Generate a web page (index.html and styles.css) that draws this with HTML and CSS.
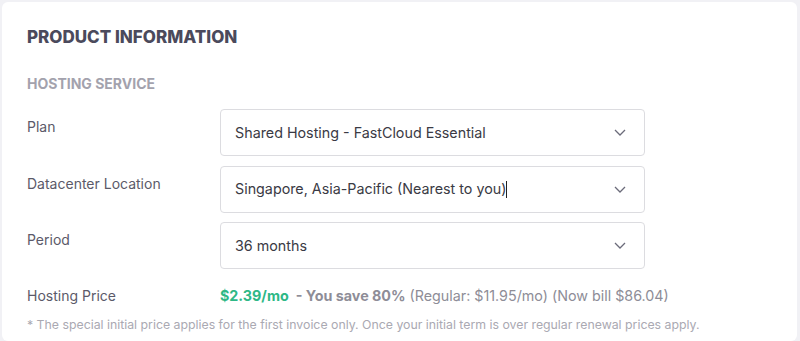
FILE: index.html
```html
<!DOCTYPE html>
<html>
<head>
<meta charset="utf-8">
<link rel="stylesheet" href="styles.css">
</head>
<body>
<div class="card">
  <h1 class="title">PRODUCT INFORMATION</h1>
  <h2 class="subtitle">HOSTING SERVICE</h2>
  <div class="form">
    <div class="row">
      <div class="label">Plan</div>
      <div class="select"><span>Shared Hosting - FastCloud Essential</span><svg class="chev" width="12" height="7" viewBox="0 0 12 7"><path d="M1 1l5 5 5-5" fill="none" stroke="#6b6b7a" stroke-width="1.3"/></svg></div>
    </div>
    <div class="row">
      <div class="label">Datacenter Location</div>
      <div class="select"><span>Singapore, Asia-Pacific (Nearest to you)<span class="caret"></span></span><svg class="chev" width="12" height="7" viewBox="0 0 12 7"><path d="M1 1l5 5 5-5" fill="none" stroke="#6b6b7a" stroke-width="1.3"/></svg></div>
    </div>
    <div class="row">
      <div class="label">Period</div>
      <div class="select"><span>36 months</span><svg class="chev" width="12" height="7" viewBox="0 0 12 7"><path d="M1 1l5 5 5-5" fill="none" stroke="#6b6b7a" stroke-width="1.3"/></svg></div>
    </div>
    <div class="row price-row">
      <div class="label">Hosting Price</div>
      <div class="price"><span class="green">$2.39/mo</span> <span class="save">- You save 80%</span> (Regular: $11.95/mo) (Now bill $86.04)</div>
    </div>
  </div>
  <p class="note">* The special initial price applies for the first invoice only. Once your initial term is over regular renewal prices apply.</p>
</div>
</body>
</html>
```
FILE: styles.css
```css
html, body { margin: 0; padding: 0; }
body {
  background: #f1f1f5;
  font-family: Inter, "Noto Sans", sans-serif;
  width: 800px;
  height: 341px;
  overflow: hidden;
}
.card {
  background: #fff;
  margin: 2px 3px 0 2px;
  border-radius: 6px;
  padding: 25px 25px 0 25px;
  height: 339px;
  box-sizing: border-box;
}
.title {
  margin: 0;
  font-size: 17px;
  font-weight: 800;
  color: #4b4a5c;
  line-height: 20px;
}
.subtitle {
  margin: 28px 0 0 0;
  font-size: 14px;
  font-weight: 700;
  color: #a3a2ad;
  line-height: 18px;
}
.form {
  margin-top: 16px;
  display: flex;
  flex-direction: column;
  gap: 9.5px;
}
.row {
  display: grid;
  grid-template-columns: 193px auto;
  align-items: start;
}
.label {
  font-size: 14px;
  color: #5b5a69;
  padding-top: 9px;
  line-height: 18px;
}
.select {
  box-sizing: border-box;
  width: 425px;
  height: 47px;
  border: 1px solid #dcdce0;
  border-radius: 4px;
  display: flex;
  align-items: center;
  justify-content: space-between;
  padding: 0 18px 0 14px;
  font-size: 14.3px;
  color: #3a3a44;
}
.caret {
  display: inline-block;
  width: 1px;
  height: 17px;
  background: #222;
  vertical-align: -4px;
}
.price-row { margin-top: 8px; }
.price-row .label { padding-top: 0; }
.price {
  font-size: 14.3px;
  color: #8e8d97;
  line-height: 18px;
  white-space: nowrap;
}
.green { color: #2eb886; font-weight: 700; }
.save { font-weight: 700; margin-left: 3px; }
.note {
  margin: 12px 0 0 0;
  font-size: 12.3px;
  color: #aaa9b2;
  line-height: 16px;
  white-space: nowrap;
}
```
